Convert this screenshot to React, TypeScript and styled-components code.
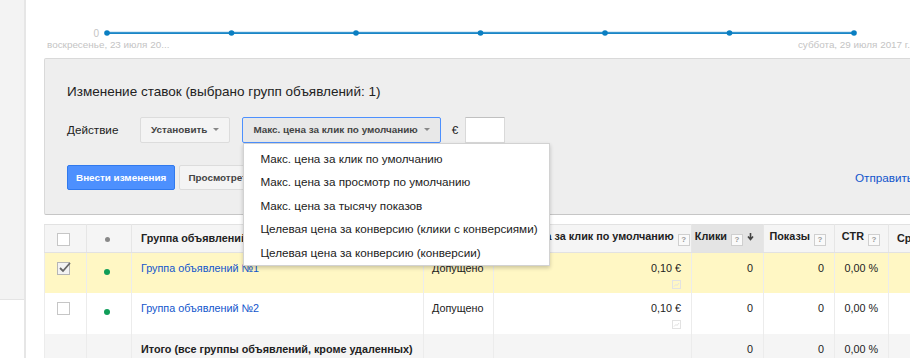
import React from "react";
import styled, { createGlobalStyle } from "styled-components";

const GlobalStyle = createGlobalStyle`
  html, body {
    margin: 0;
    padding: 0;
    background: #ffffff;
    overflow: hidden;
  }
  body {
    font-family: "Liberation Sans", Arial, sans-serif;
    font-size: 11.7px;
    color: #222;
  }
`;

const Page = styled.div`
  display: flex;
  width: 1100px;
  height: 358px;
`;

const Sidebar = styled.div`
  flex: 0 0 24px;
  border-right: 2px solid #e6e6e6;
  display: flex;
  flex-direction: column;
`;

const SidebarPanel = styled.div`
  height: 299px;
  background: #f3f3f3;
  border-bottom: 1px solid #e4e4e4;
`;

const Main = styled.div`
  flex: 1;
  padding-left: 18px;
  display: flex;
  flex-direction: column;
`;

// Chart
const ChartBlock = styled.div`
  padding-top: 26px;
  height: 32px;
`;

const ChartRow = styled.div`
  display: flex;
  align-items: center;
  height: 14px;
`;

const YLabel = styled.span`
  width: 55px;
  text-align: right;
  font-size: 10px;
  color: #c4c4c4;
`;

const DateRow = styled.div`
  display: flex;
  justify-content: space-between;
  width: 863px;
  margin-left: 3px;
  font-size: 9.9px;
  color: #c4c4c4;
  line-height: 12px;
  margin-top: -1px;
`;

// Panel
const Panel = styled.div`
  width: 1000px;
  background: #eeeeee;
  border: 1px solid #d9d9d9;
  border-bottom-color: #c6c6c6;
  border-radius: 2px;
  padding: 24px 22px 24px;
  box-sizing: border-box;
  height: 157px;
`;

const PanelTitle = styled.div`
  font-size: 13.5px;
  line-height: 17px;
  color: #222;
`;

const ActionRow = styled.div`
  display: flex;
  align-items: center;
  margin-top: 17px;
  height: 26px;
`;

const ActionLabel = styled.span`
  width: 73px;
  font-size: 11.7px;
  color: #222;
`;

const Caret = styled.span`
  display: inline-block;
  width: 0;
  height: 0;
  border-left: 3px solid transparent;
  border-right: 3px solid transparent;
  border-top: 3px solid #888;
  margin-left: 6px;
  vertical-align: middle;
`;

const GrayButton = styled.button<{ $active?: boolean }>`
  height: 26px;
  box-sizing: border-box;
  padding: 0 10px;
  font-family: "Liberation Sans", Arial, sans-serif;
  font-size: 9.9px;
  font-weight: bold;
  color: #444;
  background: ${(p) => (p.$active ? "#e8e8e8" : "#f4f4f4")};
  border: 1px solid ${(p) => (p.$active ? "#4d90fe" : "#dcdcdc")};
  border-radius: 2px;
  display: inline-flex;
  align-items: center;
  white-space: nowrap;
`;

const SelectWrap = styled.div`
  position: relative;
  margin-left: 12px;
`;

const Menu = styled.div`
  position: absolute;
  top: 100%;
  left: 1px;
  width: 307px;
  box-sizing: border-box;
  background: #fff;
  border: 1px solid #d2d2d2;
  box-shadow: 0 2px 4px rgba(0, 0, 0, 0.2);
  padding: 3px 0 1px;
  z-index: 10;
`;

const MenuItem = styled.div`
  height: 23.6px;
  line-height: 23.6px;
  padding-left: 16px;
  font-size: 11.7px;
  color: #222;
  white-space: nowrap;
`;

const Currency = styled.span`
  margin-left: 11px;
  font-size: 11.7px;
  color: #222;
`;

const BidInput = styled.input`
  margin-left: 7px;
  width: 40px;
  height: 26px;
  box-sizing: border-box;
  border: 1px solid #d9d9d9;
  border-top-color: #c0c0c0;
  background: #fff;
  border-radius: 1px;
`;

const ApplyRow = styled.div`
  display: flex;
  align-items: center;
  margin-top: 22px;
`;

const ButtonGroup = styled.div`
  flex: 0 0 788px;
  display: flex;
  gap: 4px;
`;

const BlueButton = styled.button`
  height: 25px;
  box-sizing: border-box;
  padding: 0 8px;
  font-family: "Liberation Sans", Arial, sans-serif;
  font-size: 9.9px;
  font-weight: bold;
  color: #fff;
  background: #4d90fe;
  border: 1px solid #3079ed;
  border-radius: 2px;
  white-space: nowrap;
`;

const PlainButton = styled(GrayButton)`
  height: 25px;
  padding: 0 8px;
`;

const Link = styled.a`
  font-size: 11.7px;
  color: #1155cc;
  text-decoration: none;
  white-space: nowrap;
`;

// Table
const Table = styled.table`
  margin-top: 9px;
  border-collapse: collapse;
  table-layout: fixed;
  width: 960px;
`;

const HeadCell = styled.th<{ $align?: string; $sorted?: boolean; $pad?: number }>`
  height: 27px;
  padding: 0 ${(p) => (p.$align === "right" ? 8 : 0)}px 0 ${(p) => p.$pad ?? 0}px;
  background: ${(p) => (p.$sorted ? "#e4e4e4" : "#f5f5f5")};
  border-top: 1px solid #e2e2e2;
  border-bottom: 1px solid #e2e2e2;
  border-right: 1px solid #e6e6e6;
  border-left: 1px solid #e6e6e6;
  font-size: 10.8px;
  font-weight: bold;
  color: #222;
  text-align: ${(p) => p.$align ?? "left"};
  white-space: nowrap;
  overflow: hidden;
`;

const Row = styled.tr<{ $tone: "selected" | "plain" | "total" }>`
  background: ${(p) =>
    p.$tone === "selected" ? "#fff7c4" : p.$tone === "total" ? "#f5f5f5" : "#ffffff"};
`;

const Cell = styled.td<{ $align?: string; $pad?: number; $bold?: boolean; $h?: number }>`
  height: ${(p) => p.$h ?? 41}px;
  box-sizing: border-box;
  vertical-align: top;
  padding: 9px ${(p) => (p.$align === "right" ? 10 : 0)}px 0 ${(p) => p.$pad ?? 0}px;
  border-right: 1px solid #ececec;
  border-left: 1px solid #ececec;
  font-size: 10.8px;
  font-weight: ${(p) => (p.$bold ? "bold" : "normal")};
  text-align: ${(p) => p.$align ?? "left"};
  white-space: nowrap;
  overflow: hidden;
`;

const GroupLink = styled.a`
  color: #1155cc;
  text-decoration: none;
`;

const Checkbox = styled.span<{ $checked?: boolean }>`
  display: inline-block;
  width: 13px;
  height: 13px;
  box-sizing: border-box;
  border: 1px solid ${(p) => (p.$checked ? "#b5b5b5" : "#c6c6c6")};
  background: ${(p) => (p.$checked ? "#f3f3f3" : "#fff")};
  position: relative;
  vertical-align: top;
`;

const CheckMark = styled.svg`
  position: absolute;
  left: 0;
  top: -3px;
`;

const Dot = styled.span<{ $color: string; $size: number }>`
  display: inline-block;
  width: ${(p) => p.$size}px;
  height: ${(p) => p.$size}px;
  border-radius: 50%;
  background: ${(p) => p.$color};
`;

const HelpBox = styled.span`
  display: inline-block;
  width: 12px;
  height: 12px;
  box-sizing: border-box;
  border: 1px solid #cfcfcf;
  background: #fafafa;
  color: #9a9a9a;
  font-size: 8px;
  line-height: 10px;
  text-align: center;
  font-weight: bold;
  margin-left: 4px;
  vertical-align: -2px;
`;

const BidValue = styled.div`
  line-height: 13px;
`;

const MiniChart = styled.svg`
  display: block;
  margin: 5px 0 0 auto;
`;

const dots = [0, 1, 2, 3, 4, 5, 6];

const menuItems = [
  "Макс. цена за клик по умолчанию",
  "Макс. цена за просмотр по умолчанию",
  "Макс. цена за тысячу показов",
  "Целевая цена за конверсию (клики с конверсиями)",
  "Целевая цена за конверсию (конверсии)",
];

const rows = [
  { name: "Группа объявлений №1", checked: true },
  { name: "Группа объявлений №2", checked: false },
];

const Help = () => <HelpBox>?</HelpBox>;

const ChartIcon = () => (
  <MiniChart width="9" height="9" viewBox="0 0 9 9">
    <rect x="0.5" y="0.5" width="8" height="8" fill="none" stroke="#e2e2e2" />
    <polyline points="2,6.5 4,4.5 5,5.5 7,3" fill="none" stroke="#e2e2e2" />
  </MiniChart>
);

export default function App() {
  return (
    <>
      <GlobalStyle />
      <Page>
        <Sidebar>
          <SidebarPanel />
        </Sidebar>
        <Main>
          <ChartBlock>
            <ChartRow>
              <YLabel>0</YLabel>
              <svg width="760" height="8" viewBox="0 0 760 8" style={{ marginLeft: 4 }}>
                <line x1="4" y1="4" x2="751" y2="4" stroke="#1a86c6" strokeWidth="2" />
                <line x1="4" y1="3" x2="751" y2="3" stroke="#7fbde3" strokeWidth="0.6" />
                {dots.map((i) => (
                  <circle key={i} cx={4 + i * 124.5} cy="4" r="2.8" fill="#0a7fc2" />
                ))}
              </svg>
            </ChartRow>
            <DateRow>
              <span>воскресенье, 23 июля 20...</span>
              <span>суббота, 29 июля 2017 г.</span>
            </DateRow>
          </ChartBlock>

          <Panel>
            <PanelTitle>Изменение ставок (выбрано групп объявлений: 1)</PanelTitle>
            <ActionRow>
              <ActionLabel>Действие</ActionLabel>
              <GrayButton>
                Установить
                <Caret />
              </GrayButton>
              <SelectWrap>
                <GrayButton $active>
                  Макс. цена за клик по умолчанию
                  <Caret />
                </GrayButton>
                <Menu>
                  {menuItems.map((item) => (
                    <MenuItem key={item}>{item}</MenuItem>
                  ))}
                </Menu>
              </SelectWrap>
              <Currency>€</Currency>
              <BidInput />
            </ActionRow>
            <ApplyRow>
              <ButtonGroup>
                <BlueButton>Внести изменения</BlueButton>
                <PlainButton>Просмотреть изменения</PlainButton>
              </ButtonGroup>
              <Link>Отправить по эл. почте</Link>
            </ApplyRow>
          </Panel>

          <Table>
            <colgroup>
              <col style={{ width: 42 }} />
              <col style={{ width: 45 }} />
              <col style={{ width: 292 }} />
              <col style={{ width: 70 }} />
              <col style={{ width: 198 }} />
              <col style={{ width: 72 }} />
              <col style={{ width: 71 }} />
              <col style={{ width: 54 }} />
              <col style={{ width: 116 }} />
            </colgroup>
            <thead>
              <tr>
                <HeadCell $pad={12}>
                  <Checkbox style={{ marginTop: 2 }} />
                </HeadCell>
                <HeadCell $pad={18}>
                  <Dot $color="#888" $size={5} />
                </HeadCell>
                <HeadCell $pad={9}>Группа объявлений</HeadCell>
                <HeadCell $pad={8}>Статус</HeadCell>
                <HeadCell $align="right">
                  Макс. цена за клик по умолчанию
                  <Help />
                </HeadCell>
                <HeadCell $align="right" $sorted>
                  Клики
                  <Help />
                  <svg width="9" height="9" viewBox="0 0 9 9" style={{ marginLeft: 3, verticalAlign: -1 }}>
                    <path d="M4.5 1 V6.5 M2 4.5 L4.5 7.5 L7 4.5" stroke="#444" strokeWidth="1.6" fill="none" />
                  </svg>
                </HeadCell>
                <HeadCell $align="right">
                  Показы
                  <Help />
                </HeadCell>
                <HeadCell $align="right">
                  CTR
                  <Help />
                </HeadCell>
                <HeadCell $pad={8}>Ср. цена за клик</HeadCell>
              </tr>
            </thead>
            <tbody>
              {rows.map((r) => (
                <Row key={r.name} $tone={r.checked ? "selected" : "plain"}>
                  <Cell $pad={12}>
                    <Checkbox $checked={r.checked}>
                      {r.checked && (
                        <CheckMark width="14" height="14" viewBox="0 0 14 14">
                          <path d="M2 8 L5 11 L12 3" stroke="#666" strokeWidth="1.8" fill="none" />
                        </CheckMark>
                      )}
                    </Checkbox>
                  </Cell>
                  <Cell $pad={17}>
                    <Dot $color="#0f9d58" $size={6} style={{ marginTop: 7 }} />
                  </Cell>
                  <Cell $pad={9}>
                    <GroupLink>{r.name}</GroupLink>
                  </Cell>
                  <Cell $pad={8}>Допущено</Cell>
                  <Cell $align="right">
                    <BidValue>0,10 €</BidValue>
                    <ChartIcon />
                  </Cell>
                  <Cell $align="right">0</Cell>
                  <Cell $align="right">0</Cell>
                  <Cell $align="right">0,00 %</Cell>
                  <Cell />
                </Row>
              ))}
              <Row $tone="total">
                <Cell $h={24} />
                <Cell $h={24} />
                <Cell $h={24} $pad={9} $bold>
                  Итого (все группы объявлений, кроме удаленных)
                </Cell>
                <Cell $h={24} />
                <Cell $h={24} />
                <Cell $h={24} $align="right">0</Cell>
                <Cell $h={24} $align="right">0</Cell>
                <Cell $h={24} $align="right">0,00 %</Cell>
                <Cell $h={24} />
              </Row>
            </tbody>
          </Table>
        </Main>
      </Page>
    </>
  );
}
